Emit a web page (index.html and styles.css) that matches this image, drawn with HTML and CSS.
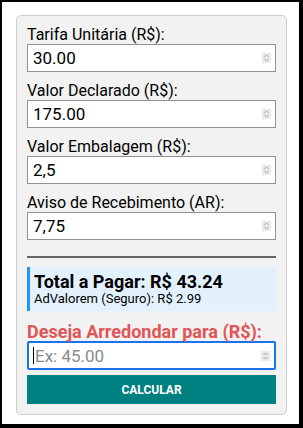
FILE: index.html
```html
<!DOCTYPE html>
<html lang="pt-BR">
<head>
    <meta charset="UTF-8">
    <meta name="viewport" content="width=device-width, initial-scale=1.0">
    <title>Calculadora de Frete</title>
    <link rel="stylesheet" href="styles.css">
</head>
<body>
    <div class="container">
        <form id="calc-form">
            <div class="form-group">
                <label for="tarifa">Tarifa Unitária (R$):</label>
                <div class="field">
                    <input type="text" id="tarifa" value="30.00">
                    <span class="spin"><svg width="5" height="8" viewBox="0 0 5 8"><path d="M0.5 3 L2.5 1 L4.5 3 M0.5 5 L2.5 7 L4.5 5" fill="none" stroke="#a0a0a8" stroke-width="1"/></svg></span>
                </div>
            </div>
            <div class="form-group">
                <label for="declarado">Valor Declarado (R$):</label>
                <div class="field">
                    <input type="text" id="declarado" value="175.00">
                    <span class="spin"><svg width="5" height="8" viewBox="0 0 5 8"><path d="M0.5 3 L2.5 1 L4.5 3 M0.5 5 L2.5 7 L4.5 5" fill="none" stroke="#a0a0a8" stroke-width="1"/></svg></span>
                </div>
            </div>
            <div class="form-group">
                <label for="embalagem">Valor Embalagem (R$):</label>
                <div class="field">
                    <input type="text" id="embalagem" value="2,5">
                    <span class="spin"><svg width="5" height="8" viewBox="0 0 5 8"><path d="M0.5 3 L2.5 1 L4.5 3 M0.5 5 L2.5 7 L4.5 5" fill="none" stroke="#a0a0a8" stroke-width="1"/></svg></span>
                </div>
            </div>
            <div class="form-group">
                <label for="ar">Aviso de Recebimento (AR):</label>
                <div class="field">
                    <input type="text" id="ar" value="7,75">
                    <span class="spin"><svg width="5" height="8" viewBox="0 0 5 8"><path d="M0.5 3 L2.5 1 L4.5 3 M0.5 5 L2.5 7 L4.5 5" fill="none" stroke="#a0a0a8" stroke-width="1"/></svg></span>
                </div>
            </div>

            <hr class="divider">

            <div class="result">
                <div class="total">Total a Pagar: R$ 43.24</div>
                <div class="advalorem">AdValorem (Seguro): R$ 2.99</div>
            </div>

            <div class="form-group round">
                <label for="arredondar">Deseja Arredondar para (R$):</label>
                <div class="field focus">
                    <span class="caret"></span>
                    <input type="text" id="arredondar" placeholder="Ex: 45.00">
                    <span class="spin"><svg width="5" height="8" viewBox="0 0 5 8"><path d="M0.5 3 L2.5 1 L4.5 3 M0.5 5 L2.5 7 L4.5 5" fill="none" stroke="#a0a0a8" stroke-width="1"/></svg></span>
                </div>
            </div>

            <button type="submit" class="btn">CALCULAR</button>
        </form>
    </div>
</body>
</html>
```

FILE: styles.css
```css
html {
    height: 100%;
    background-color: #000;
}
body {
    margin: 2px 4px 4px 2px;
    min-height: calc(100% - 6px);
    background-color: #fff;
    font-family: Roboto, "Liberation Sans", sans-serif;
    overflow: hidden;
}
.container {
    margin: 13px 12px 0 14px;
    padding: 10px;
    border: 1px solid #cfcfcf;
    border-radius: 5px;
    background-color: #f2f2f2;
}
.form-group {
    margin-bottom: 10px;
}
.form-group label {
    display: block;
    height: 18px;
    line-height: 18px;
    font-size: 16px;
    color: #000;
}
.field {
    display: flex;
    align-items: center;
    height: 28px;
    padding: 0 4px 0 5px;
    border: 1px solid #8f8f9d;
    background-color: #fff;
    box-sizing: border-box;
}
.field input {
    flex: 1;
    min-width: 0;
    padding: 0;
    border: none;
    outline: none;
    background: transparent;
    font-family: Roboto, "Liberation Sans", sans-serif;
    font-size: 17px;
    color: #000;
}
.field input::placeholder {
    color: #8a8a8a;
}
.spin {
    display: flex;
    align-items: center;
    justify-content: center;
    width: 9px;
    height: 10px;
    background-color: #e9e9ed;
}
.divider {
    margin: 16px 0 9px;
    border: none;
    border-top: 2px solid #666;
}
.result {
    padding: 5px 6px 5px 4px;
    border-left: 3px solid #2196f3;
    background-color: #e3f1fd;
}
.total {
    font-size: 18px;
    font-weight: bold;
    line-height: 19px;
}
.advalorem {
    font-size: 13px;
    line-height: 15px;
}
.round {
    margin-top: 12px;
    margin-bottom: 5px;
}
.round label {
    color: #e05555;
    font-weight: bold;
    font-size: 18px;
}
.field.focus {
    height: 29px;
    border: 2px solid #1a73e8;
    border-radius: 2px;
    padding-left: 4px;
}
.caret {
    width: 1px;
    height: 17px;
    margin-right: 1px;
    background-color: #000;
}
.btn {
    display: block;
    width: 100%;
    height: 29px;
    border: none;
    background-color: #008080;
    color: #fff;
    font-family: Roboto, "Liberation Sans", sans-serif;
    font-size: 12px;
    font-weight: bold;
    cursor: pointer;
}
```
